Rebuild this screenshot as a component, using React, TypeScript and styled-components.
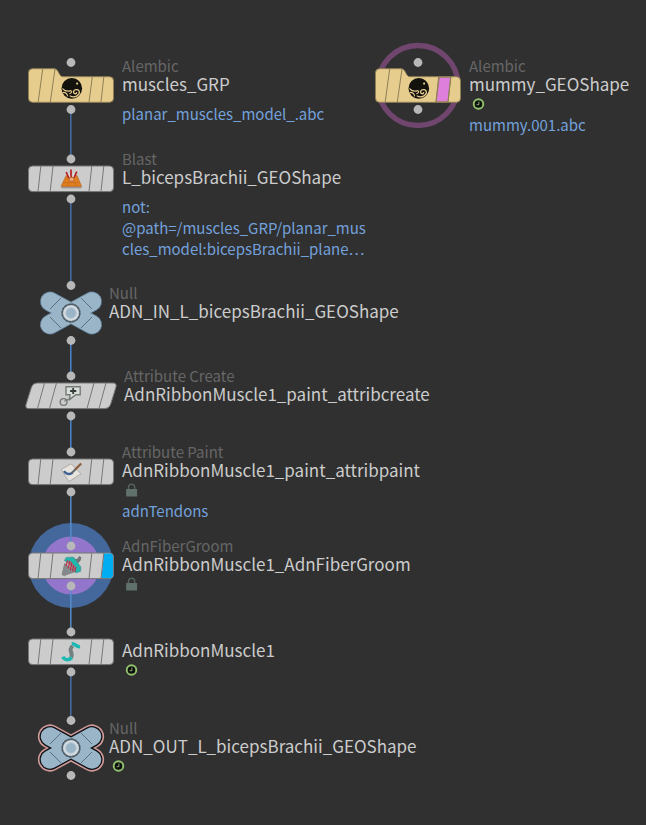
import React from 'react';
import styled, { createGlobalStyle } from 'styled-components';

const GlobalStyle = createGlobalStyle`
  html, body { margin: 0; background: #303030; }
  body { font-family: "Noto Sans CJK SC", "Noto Sans", sans-serif; }
`;

const Canvas = styled.main`
  position: relative;
  min-height: 100vh;
  background: #303030;
  overflow: hidden;
`;

const WireLayer = styled.svg`
  position: absolute;
  inset: 0;
  width: 100%;
  height: 100%;
`;

const NodeItem = styled.article<{ $x: number; $y: number; $gap: number }>`
  position: absolute;
  left: ${(p) => p.$x}px;
  top: ${(p) => p.$y - 48}px;
  display: flex;
  align-items: flex-start;
  gap: ${(p) => p.$gap}px;
`;

const Glyph = styled.svg`
  flex: none;
  overflow: visible;
`;

const Label = styled.div<{ $untitled: boolean }>`
  padding-top: ${(p) => (p.$untitled ? 36 : 19)}px;
`;

const TypeName = styled.div`
  font-size: 15px;
  line-height: 17px;
  color: #666666;
  white-space: nowrap;
`;

const NodeName = styled.h2`
  margin: 0;
  font-size: 17px;
  font-weight: 400;
  line-height: 19px;
  color: #cccccc;
  white-space: nowrap;
`;

const BadgeRow = styled.div`
  display: flex;
  align-items: center;
  height: 21px;
  padding-left: 3px;
`;

const Detail = styled.p<{ $tight: boolean }>`
  margin: ${(p) => (p.$tight ? 0 : 10)}px 0 0;
  width: 248px;
  font-size: 15px;
  line-height: 21px;
  color: #73a1dc;
  white-space: pre-line;
  word-break: break-all;
`;

type Kind = 'folder' | 'plate' | 'slant' | 'cross';
type Icon = 'alembic' | 'blast' | 'create' | 'paint' | 'groom' | 'ribbon' | 'none';

interface GraphNode {
  x: number;
  y: number;
  kind: Kind;
  icon: Icon;
  type?: string;
  name: string;
  badge?: 'clock' | 'lock';
  detail?: string;
  flag?: 'template' | 'display';
  selected?: boolean;
}

const nodes: GraphNode[] = [
  { x: 28, y: 86, kind: 'folder', icon: 'alembic', type: 'Alembic', name: 'muscles_GRP', detail: 'planar_muscles_model_.abc' },
  { x: 375, y: 86, kind: 'folder', icon: 'alembic', type: 'Alembic', name: 'mummy_GEOShape', badge: 'clock', detail: 'mummy.001.abc', flag: 'template' },
  { x: 28, y: 179, kind: 'plate', icon: 'blast', type: 'Blast', name: 'L_bicepsBrachii_GEOShape', detail: 'not:\n@path=/muscles_GRP/planar_muscles_model:bicepsBrachii_plane…' },
  { x: 40, y: 313, kind: 'cross', icon: 'none', type: 'Null', name: 'ADN_IN_L_bicepsBrachii_GEOShape' },
  { x: 25, y: 396, kind: 'slant', icon: 'create', type: 'Attribute Create', name: 'AdnRibbonMuscle1_paint_attribcreate' },
  { x: 28, y: 472, kind: 'plate', icon: 'paint', type: 'Attribute Paint', name: 'AdnRibbonMuscle1_paint_attribpaint', badge: 'lock', detail: 'adnTendons' },
  { x: 28, y: 566, kind: 'plate', icon: 'groom', type: 'AdnFiberGroom', name: 'AdnRibbonMuscle1_AdnFiberGroom', badge: 'lock', flag: 'display' },
  { x: 28, y: 652, kind: 'plate', icon: 'ribbon', name: 'AdnRibbonMuscle1', badge: 'clock' },
  { x: 40, y: 748, kind: 'cross', icon: 'none', type: 'Null', name: 'ADN_OUT_L_bicepsBrachii_GEOShape', badge: 'clock', selected: true },
];

const wires = [
  { from: 109, to: 159, color: '#466ea8' },
  { from: 199, to: 285, color: '#466ea8' },
  { from: 340, to: 376, color: '#4a84d0' },
  { from: 416, to: 452, color: '#4a84d0' },
  { from: 492, to: 546, color: '#558bcb' },
  { from: 586, to: 632, color: '#558bcb' },
  { from: 672, to: 720, color: '#466ea8' },
];

const widths: Record<Kind, number> = { folder: 86, plate: 86, slant: 92, cross: 62 };
const gaps: Record<Kind, number> = { folder: 8, plate: 8, slant: 7, cross: 7 };
const ports: Record<Kind, number> = { folder: 23.5, plate: 20, slant: 20, cross: 27.5 };

function Teeth() {
  return (
    <g>
      <circle r="8.8" fill="#b4c0c9" stroke="#4c5a64" strokeWidth="1.7" strokeDasharray="1.8 1.66" />
      <circle r="7.6" fill="#d3dbe1" />
      <circle r="5.2" fill="#9ab4c8" stroke="#b3c3cf" strokeWidth="1" />
    </g>
  );
}

const crossLines = 'M-21 -11.5L21 11.5M-21 11.5L21 -11.5';

function CrossShape({ selected }: { selected?: boolean }) {
  return (
    <g strokeLinecap="round" fill="none">
      {selected && <path d={crossLines} stroke="#d39a9a" strokeWidth="24.2" />}
      {selected && <path d={crossLines} stroke="#0e1214" strokeWidth="21" />}
      {!selected && <path d={crossLines} stroke="#65839a" strokeWidth="20" />}
      <path d={crossLines} stroke="#9ab4c8" strokeWidth="18.4" />
      <path
        d="M-10 -15L-21 -4M10 -15L21 -4M-10 15L-21 4M10 15L21 4"
        stroke="#54687a"
        strokeWidth="0.9"
        strokeLinecap="butt"
      />
      <Teeth />
    </g>
  );
}

function PlateShape({ flag }: { flag?: string }) {
  return (
    <g stroke="#777777" strokeWidth="1">
      <rect x="-42.5" y="-13" width="85" height="25.6" rx="4" fill="#cccccc" />
      {flag && <path d="M33 -12.4H38.5Q42 -12.4 42 -9V8.5Q42 12 38.5 12H30.3Z" fill="#00adf2" stroke="none" />}
      <path d="M-30.2 -13L-33 12.5M-18 -13L-20.8 12.5M20.8 -13L18 12.5M32.8 -13L30 12.5" fill="none" />
    </g>
  );
}

function SlantShape() {
  return (
    <g stroke="#777777" strokeWidth="1">
      <path
        d="M-34 -13H42Q46 -13 45 -9L39.5 8.6Q38 12.6 34 12.6H-42Q-46 12.6 -45 8.6L-39.5 -9Q-38 -13 -34 -13Z"
        fill="#cccccc"
      />
      <path d="M-26.5 -13L-33.5 12.5M-14.5 -13L-21.5 12.5M23 -13L16 12.5M35 -13L28 12.5" fill="none" />
    </g>
  );
}

function FolderShape({ flag }: { flag?: string }) {
  return (
    <g stroke="#8f7f55" strokeWidth="1">
      <path
        d="M-38.5 -17.3H-17C-12 -17.3 -12.5 -9.3 -8 -9.3H38.5Q42.5 -9.3 42.5 -5.3V12.3Q42.5 16.3 38.5 16.3H-38.5Q-42.5 16.3 -42.5 12.3V-13.3Q-42.5 -17.3 -38.5 -17.3Z"
        fill="#e6cd8e"
      />
      {flag && <path d="M20.6 -8.8H32.8L30 15.8H18Z" fill="#de7fdc" />}
      <path d="M-28.3 -17L-32.8 16M-16 -17L-20.7 16M21.3 -9L18 16M32.8 -9L30 16" fill="none" />
    </g>
  );
}

function NodeIcon({ icon }: { icon: Icon }) {
  switch (icon) {
    case 'alembic':
      return (
        <g transform="translate(0.8 2.4)">
          <circle r="10.3" fill="#14120c" />
          <g fill="none" stroke="#e6cd8e" strokeLinecap="round">
            <path d="M-9 0.4C-6.4 3.4 -3.4 3 -1 2.2" strokeWidth="1.2" />
            <path d="M-8.6 4C-5.6 4 -4.6 5.6 -4.2 7.6" strokeWidth="1.1" />
            <path d="M-1.6 7.6C2 9.4 7.4 7.8 7.6 3.8C7.4 0.8 2.8 0.4 1.8 3C1.2 5.4 4.4 6.2 4.8 4.2" strokeWidth="1.3" />
            <path d="M-2 5.2C-1 5 0 4 0 2.6" strokeWidth="1.1" />
          </g>
          <circle cx="5.3" cy="-4.8" r="1.1" fill="#e6cd8e" />
        </g>
      );
    case 'blast':
      return (
        <g>
          <path d="M-9.6 8.6H10.4" stroke="#777" strokeWidth="1.6" opacity="0.6" />
          <path d="M-10 7.4L-4.8 -3.5L-2.4 -1L0 -3L3 -1L6 -3.6L10.6 7.4Z" fill="#df7d1f" stroke="#b76524" strokeWidth="0.7" />
          <path d="M-8 3.6H8.4M-2.6 3.8L-3.6 7.2M4 3.8L5 7.2M-5.4 0H-2" stroke="#c56b21" strokeWidth="0.7" />
          <path d="M-4.8 -7L-2.2 -1M0 -9.4V-2M5.8 -7.4L2.8 -1" stroke="#b51e20" strokeWidth="1.7" fill="none" />
          <path d="M-2 -5L-1 -2M3 -6L2 -2" stroke="#eee" strokeWidth="0.8" />
          <rect x="-1.6" y="-1.6" width="4.4" height="3.8" fill="#e6a57a" stroke="#b65d2c" strokeWidth="0.6" />
        </g>
      );
    case 'create':
      return (
        <g fill="none" stroke="#747a76">
          <circle cx="-7.4" cy="6" r="3.4" strokeWidth="1.4" />
          <path d="M-6.6 5.2L2 1" strokeWidth="1.2" />
          <path d="M-5 -9.2H9.2V-1.2H4.8L-1.5 3.6L-1 -1.2H-5Z" fill="#d9dfda" strokeWidth="1.4" />
          <path d="M2.2 -8V-2M-0.9 -5H5.3" stroke="#343c37" strokeWidth="1.8" />
        </g>
      );
    case 'paint':
      return (
        <g>
          <path d="M-9.8 -2.5L0 -8.2L10 1.8L-2 9.6Z" fill="#e7e4df" stroke="#aaa49c" strokeWidth="0.9" />
          <path d="M-7 -0.8C-5 2.4 -1 2.8 1.6 0.8" fill="none" stroke="#3f6294" strokeWidth="2.4" />
          <path d="M0.8 1L4.8 -3" stroke="#5f666c" strokeWidth="2" />
          <path d="M4.2 -2.4L10.2 -8.6" stroke="#8c5a36" strokeWidth="2.1" />
        </g>
      );
    case 'groom':
      return (
        <g>
          <path d="M3.5 -7L6.6 -7.2L8 -10L10.4 -8.8L9.6 -5.4L6.4 -2Z" fill="#707577" />
          <path d="M-6.4 -2.4L-9 8.6L-6.6 9.8L-4 8.4L4.6 5.6Z" fill="#85898b" stroke="#717577" strokeWidth="0.6" />
          <path
            d="M-5 -8.6L2.6 -9L5 -5.6L10 1.2L9.6 5.4L4.6 7L3.4 4.2L-3.6 -4L-6.6 -5.2Z"
            fill="#1fb8ae"
            stroke="#5a8a88"
            strokeWidth="0.6"
            strokeLinejoin="round"
          />
          <path d="M-4.4 -4.2L-0.6 -5.2L5.2 1.8L3.6 5Z" fill="#8d7f84" />
          <path
            d="M-3.4 -5.6L-5 0M-1 -5.2L-2.8 2.4M0.8 -3.2L-0.6 4.2M2.8 -1L1.6 5.4M4.8 1.2L3.8 5.6"
            fill="none"
            stroke="#c02c46"
            strokeWidth="1.2"
          />
        </g>
      );
    case 'ribbon':
      return (
        <g fill="none">
          <path d="M1.6 -6.2C-3.6 -1 3 0.4 0 5.6" stroke="#74807f" strokeWidth="4" />
          <path d="M-8.2 4.8C-6.2 8.8 -2 8.2 0.8 5.6" stroke="#1bb9b3" strokeWidth="3.6" />
          <path d="M0.8 -8.2C4.4 -8.8 5 -4.6 9 -5.4" stroke="#1bb9b3" strokeWidth="3.6" />
        </g>
      );
    default:
      return null;
  }
}

function Badge({ kind }: { kind: 'clock' | 'lock' }) {
  return kind === 'clock' ? (
    <svg width="14" height="14" viewBox="-6.5 -7 14 14" role="img" aria-label="Time dependent">
      <circle r="4.8" fill="#0c100a" stroke="#93c36f" strokeWidth="1.9" />
      <path d="M0.4 -2.4V0.7H-1.9" stroke="#93ab80" strokeWidth="1" fill="none" />
    </svg>
  ) : (
    <svg width="14" height="14" viewBox="-6.5 -7 14 14" role="img" aria-label="Locked">
      <path d="M-3 0V-2.6C-3 -6.8 3.2 -6.8 3.2 -2.6V0" fill="none" stroke="#53605c" strokeWidth="1.5" />
      <rect x="-5.4" y="-1" width="11" height="7.5" rx="0.5" fill="#60706b" />
    </svg>
  );
}

function NodeView({ node }: { node: GraphNode }) {
  const w = widths[node.kind];
  const port = ports[node.kind];
  return (
    <NodeItem $x={node.x} $y={node.y} $gap={gaps[node.kind]}>
      <Glyph width={w} height="96" viewBox={`${-w / 2} -48 ${w} 96`} aria-hidden="true">
        {node.kind === 'folder' && <FolderShape flag={node.flag} />}
        {node.kind === 'plate' && <PlateShape flag={node.flag} />}
        {node.kind === 'slant' && <SlantShape />}
        {node.kind === 'cross' && <CrossShape selected={node.selected} />}
        <NodeIcon icon={node.icon} />
        <circle cy={-port} r="4.4" fill="#b8b8b8" />
        <circle cy={port} r="4.4" fill="#b8b8b8" />
      </Glyph>
      <Label $untitled={!node.type}>
        {node.type && <TypeName>{node.type}</TypeName>}
        <NodeName>{node.name}</NodeName>
        {node.badge && (
          <BadgeRow>
            <Badge kind={node.badge} />
          </BadgeRow>
        )}
        {node.detail && <Detail $tight={!!node.badge}>{node.detail}</Detail>}
      </Label>
    </NodeItem>
  );
}

export default function App() {
  return (
    <>
      <GlobalStyle />
      <Canvas>
        <WireLayer aria-hidden="true">
          <circle cx="418" cy="85.5" r="40" fill="none" stroke="#70456e" strokeWidth="5.4" />
          <circle cx="71" cy="565.5" r="42.5" fill="#44689b" />
          <circle cx="71" cy="565.5" r="29" fill="#9375cb" />
          {wires.map((w) => (
            <path key={w.from} d={`M70.8 ${w.from}V${w.to}`} stroke={w.color} strokeWidth="1.5" />
          ))}
        </WireLayer>
        {nodes.map((n) => (
          <NodeView key={n.name} node={n} />
        ))}
      </Canvas>
    </>
  );
}
